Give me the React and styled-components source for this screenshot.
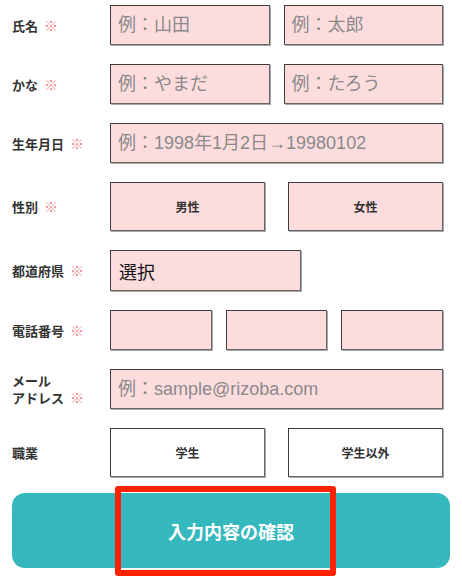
import React from "react";
import styled, { createGlobalStyle } from "styled-components";

const GlobalStyle = createGlobalStyle`
  html, body {
    margin: 0;
    background: #ffffff;
    font-family: "Noto Sans CJK JP", "Noto Sans", sans-serif;
    color: #333;
  }
`;

const fields = [
  { label: "氏名", required: true, type: "pair", placeholders: ["例：山田", "例：太郎"] },
  { label: "かな", required: true, type: "pair", placeholders: ["例：やまだ", "例：たろう"] },
  { label: "生年月日", required: true, type: "single", placeholders: ["例：1998年1月2日→19980102"] },
  { label: "性別", required: true, type: "choice", options: ["男性", "女性"], pink: true },
  { label: "都道府県", required: true, type: "select", value: "選択" },
  { label: "電話番号", required: true, type: "phone" },
  { label: ["メール", "アドレス"], required: true, type: "single", placeholders: ["例：sample@rizoba.com"] },
  { label: "職業", required: false, type: "choice", options: ["学生", "学生以外"], pink: false },
];

const App = () => {
  return (
    <>
      <GlobalStyle />
      <Form>
        {fields.map((f, i) => (
          <Row key={i}>
            <Label>
              {Array.isArray(f.label) ? (
                <>
                  <span>{f.label[0]}</span>
                  <br />
                  <span>{f.label[1]}</span>
                </>
              ) : (
                f.label
              )}
              {f.required && <Mark>※</Mark>}
            </Label>
            {f.type === "pair" && (
              <Fields cols={2} gap={14}>
                {f.placeholders.map((p) => (
                  <Input key={p} placeholder={p} />
                ))}
              </Fields>
            )}
            {f.type === "single" && (
              <Fields cols={1} gap={0}>
                <Input placeholder={f.placeholders[0]} />
              </Fields>
            )}
            {f.type === "choice" && (
              <Fields cols={2} gap={23}>
                {f.options.map((o) => (
                  <Choice key={o} pink={f.pink}>
                    {o}
                  </Choice>
                ))}
              </Fields>
            )}
            {f.type === "select" && <Select>{f.value}</Select>}
            {f.type === "phone" && (
              <Fields cols={3} gap={14}>
                <Input />
                <Input />
                <Input />
              </Fields>
            )}
          </Row>
        ))}
        <SubmitWrap>
          <Submit>入力内容の確認</Submit>
          <Highlight />
        </SubmitWrap>
      </Form>
    </>
  );
};

export default App;

const Form = styled.div`
  padding: 5px 19px 17px 12px;
`;

const Row = styled.div`
  display: grid;
  grid-template-columns: 98px 1fr;
  align-items: center;
  margin-bottom: 19px;
`;

const Label = styled.div`
  font-size: 13px;
  font-weight: 700;
  line-height: 17px;
  color: #333;
`;

const Mark = styled.span`
  color: #f27f88;
  font-weight: 400;
  font-size: 14px;
  margin-left: 6px;
`;

const Fields = styled.div`
  display: grid;
  grid-template-columns: repeat(${(p) => p.cols}, 1fr);
  gap: ${(p) => p.gap}px;
`;

const Box = styled.div`
  box-sizing: border-box;
  background: #fddcde;
  border: 1px solid #3c3c3c;
  border-right-color: #666;
  border-bottom-color: #666;
  box-shadow: 1px 1px 0 #a8a8a8;
`;

const Input = styled(Box).attrs({ as: "input" })`
  display: block;
  width: 100%;
  height: 40px;
  margin: 0;
  padding: 0 7px;
  font-family: "Liberation Sans", "Noto Sans CJK JP", sans-serif;
  font-size: 18px;
  color: #333;
  outline: none;
  border-radius: 0;

  &::placeholder {
    color: #8a8a8a;
  }
`;

const Choice = styled(Box)`
  height: 49px;
  display: flex;
  align-items: center;
  justify-content: center;
  font-size: 12px;
  font-weight: 700;
  color: #333;
  background: ${(p) => (p.pink ? "#fddcde" : "#ffffff")};
`;

const Select = styled(Box)`
  width: 191px;
  height: 41px;
  display: flex;
  align-items: center;
  padding: 0 8px;
  font-size: 18px;
  color: #111;
`;

const SubmitWrap = styled.div`
  position: relative;
  margin: -3px -7px 0 0;
`;

const Submit = styled.div`
  height: 75px;
  border-radius: 13px;
  background: #35b8bd;
  color: #ffffff;
  font-size: 18px;
  font-weight: 700;
  display: flex;
  align-items: center;
  justify-content: center;
`;

const Highlight = styled.div`
  position: absolute;
  left: 103px;
  top: -7px;
  bottom: -8px;
  width: 221px;
  box-sizing: border-box;
  border: 6px solid #ff2200;
  border-radius: 3px;
`;
